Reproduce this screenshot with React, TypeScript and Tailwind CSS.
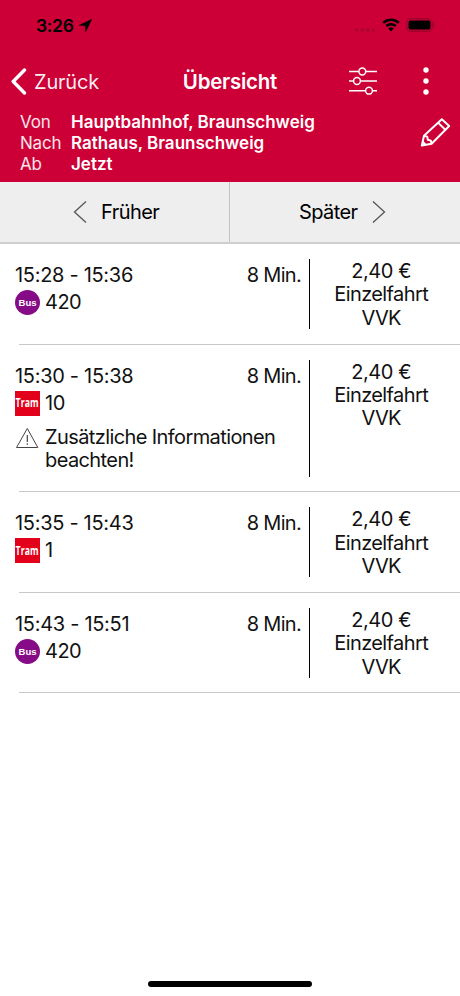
import clsx from 'clsx'

type Trip = {
  time: string
  duration: string
  kind: 'bus' | 'tram'
  line: string
  notice?: string
}

const trips: Trip[] = [
  { time: '15:28 - 15:36', duration: '8 Min.', kind: 'bus', line: '420' },
  { time: '15:30 - 15:38', duration: '8 Min.', kind: 'tram', line: '10', notice: 'Zusätzliche Informationen beachten!' },
  { time: '15:35 - 15:43', duration: '8 Min.', kind: 'tram', line: '1' },
  { time: '15:43 - 15:51', duration: '8 Min.', kind: 'bus', line: '420' },
]

const route = [
  { label: 'Von', value: 'Hauptbahnhof, Braunschweig' },
  { label: 'Nach', value: 'Rathaus, Braunschweig' },
  { label: 'Ab', value: 'Jetzt' },
]

function StatusBar() {
  return (
    <div className="flex h-[50px] items-center pl-9 pr-[24px] text-black">
      <span className="mt-0.5 text-[17.5px] font-semibold leading-5 tracking-[-0.3px]">3:26</span>
      <svg className="ml-[5px] mt-px" width="13" height="13" viewBox="0 0 13 13" fill="currentColor">
        <path d="M12.8.2.2 6.3l6 .5.5 6z" stroke="currentColor" strokeWidth=".4" />
      </svg>
      <svg className="ml-auto mt-2.5" width="22" height="4" viewBox="0 0 22 4" fill="#a00530">
        <circle cx="2.5" cy="2" r="1.5" />
        <circle cx="8.1" cy="2" r="1.5" />
        <circle cx="13.9" cy="2" r="1.5" />
        <circle cx="19.5" cy="2" r="1.5" />
      </svg>
      <svg className="ml-[6px]" width="18" height="14" viewBox="0 0 18 14">
        <path d="M1.2 4.8a11.4 11.4 0 0 1 15.6 0" fill="none" stroke="#000" strokeWidth="2.5" />
        <path d="M4.3 8a7 7 0 0 1 9.4 0" fill="none" stroke="#000" strokeWidth="2.4" />
        <path d="M9 13.4 6.2 10.5a4.2 4.2 0 0 1 5.6 0z" />
      </svg>
      <svg className="ml-[6px]" width="30" height="14" viewBox="0 0 30 14">
        <rect x=".8" y=".8" width="25.4" height="12.4" rx="3.6" fill="none" stroke="#8a0627" />
        <rect x="2.5" y="2.5" width="22" height="9" rx="2" />
        <path d="M27.6 4.8c1.3.5 1.3 3.9 0 4.4z" fill="#8a0627" />
      </svg>
    </div>
  )
}

function Header() {
  return (
    <header className="h-[182px] bg-[#cc0036] text-white">
      <StatusBar />
      <div className="grid h-[62px] grid-cols-3 items-center pl-[11px] pr-[31px]">
        <button className="flex items-center text-[20px] leading-6">
          <svg width="16" height="27" viewBox="0 0 16 27" fill="none" stroke="currentColor" strokeWidth="3.4" strokeLinecap="round" strokeLinejoin="round">
            <path d="M13.5 2 2.2 13.5l11.3 11.5" />
          </svg>
          <span className="ml-[7px] mt-px tracking-[-0.2px] text-white/95">Zurück</span>
        </button>
        <h1 className="ml-[20px] mt-px text-center text-[20.5px] font-semibold leading-6 tracking-[-0.25px]">Übersicht</h1>
        <div className="flex items-center justify-end gap-[46px]">
          <svg width="28" height="28" viewBox="0 0 28 28" fill="none" stroke="currentColor" strokeWidth="1.5">
            <path d="M0 4.5h9.8M16.8 4.5H28M0 14h4.5M11.5 14H28M0 23.7h16.5M23.5 23.7H28" />
            <circle cx="13.3" cy="4.5" r="3.4" />
            <circle cx="8" cy="14" r="3.4" />
            <circle cx="20" cy="23.7" r="3.4" />
          </svg>
          <svg width="6" height="28" viewBox="0 0 6 28" fill="currentColor">
            <circle cx="3" cy="3" r="2.7" />
            <circle cx="3" cy="14" r="2.7" />
            <circle cx="3" cy="25" r="2.7" />
          </svg>
        </div>
      </div>
      <div className="flex justify-between pl-5 pr-[9px]">
        <dl className="text-[17px] leading-[21px]">
          {route.map((r) => (
            <div key={r.label} className="flex">
              <dt className="w-[51px] tracking-[-0.2px] text-white/90">{r.label}</dt>
              <dd className="font-semibold">{r.value}</dd>
            </div>
          ))}
        </dl>
        <svg className="mt-[5px]" width="31" height="31" viewBox="0 0 31 31" fill="none" stroke="currentColor" strokeWidth="2" strokeLinejoin="round">
          <path d="M1.8 28.6 4 18.8 21.8 2.2 29.2 9 11.6 26.8z" />
          <path d="M18 5.6l7.3 7.2M4 18.8l3.2.8.6 3.2 3 .8.8 3.2" />
          <path d="M1.8 28.6l1.1-5 4 4.2z" fill="currentColor" stroke="none" />
        </svg>
      </div>
    </header>
  )
}

function Pager() {
  return (
    <nav className="flex h-[62px] border-b-2 border-[#cfcfcf] bg-[#eeeeee] text-[20px] leading-6 tracking-[-0.55px] text-black">
      <button className="flex w-[230px] items-center border-r border-[#c4c4c4] pl-[73px]">
        <svg width="14" height="24" viewBox="0 0 14 24" fill="none" stroke="#555" strokeWidth="1.3">
          <path d="M13 1.5 1.5 12 13 22.5" />
        </svg>
        <span className="ml-[14px]">Früher</span>
      </button>
      <button className="flex flex-1 items-center pl-[69px]">
        <span className="w-[59px] text-left tracking-[-0.6px]">Später</span>
        <svg className="ml-[14px]" width="14" height="24" viewBox="0 0 14 24" fill="none" stroke="#555" strokeWidth="1.3">
          <path d="M1 1.5 12.5 12 1 22.5" />
        </svg>
      </button>
    </nav>
  )
}

function LineBadge({ kind }: { kind: Trip['kind'] }) {
  if (kind === 'bus') {
    return (
      <span className="flex size-[25px] items-center justify-center rounded-full bg-[#850c86] font-['Liberation_Sans',sans-serif] text-[9.5px] font-bold leading-none tracking-normal text-white">
        Bus
      </span>
    )
  }
  return (
    <span className="flex size-[25px] items-center justify-center bg-[#e2001a] font-['Open_Sans',sans-serif] text-[11.5px] font-bold leading-none tracking-normal text-white">
      <span className="scale-x-[0.76]">Tram</span>
    </span>
  )
}

function TripRow({ trip }: { trip: Trip }) {
  return (
    <li>
      <div className={clsx('flex pt-[15px]', trip.notice ? 'h-[146.6px]' : 'h-[99.6px]')}>
        <div className="w-[309px] shrink-0 pl-[15px] pt-[2px]">
          <div className="flex w-[286px] justify-between leading-7">
            <span className="tracking-[-0.3px]">{trip.time}</span>
            <span className="tracking-[-0.7px]">{trip.duration}</span>
          </div>
          <div className="flex items-center gap-[5px] leading-[27px]">
            <LineBadge kind={trip.kind} />
            <span className="tracking-[-0.5px]">{trip.line}</span>
          </div>
          {trip.notice && (
            <div className="mt-[9px] flex leading-[23.4px]">
              <svg className="mt-px shrink-0" width="24" height="22" viewBox="0 0 24 22" fill="none" stroke="#444" strokeWidth="1">
                <path d="M12.3 1.5 22.8 20.5H1.5z" />
                <path d="M12.3 8v7M12.3 16.3v1.5" strokeWidth="1.2" />
              </svg>
              <span className="ml-[6px] w-[245px] tracking-[-0.6px]">{trip.notice}</span>
            </div>
          )}
        </div>
        <div className={clsx('w-[1.4px] shrink-0 bg-black', trip.notice ? 'h-[117px]' : 'h-[70px]')} />
        <div className="flex-1 pr-2 pt-[1px] text-center leading-[23.4px] tracking-[-0.6px]">
          <p className="tracking-[-0.4px]">2,40 €</p>
          <p>Einzelfahrt</p>
          <p>VVK</p>
        </div>
      </div>
      <div className="ml-[19px] h-px bg-[#c8c8c8]" />
    </li>
  )
}

export default function App() {
  return (
    <div className="flex h-[996px] w-[460px] flex-col overflow-hidden bg-white font-[Inter,sans-serif] text-[#111]">
      <Header />
      <Pager />
      <ul className="flex-1 text-[20px]">
        {trips.map((trip) => (
          <TripRow key={trip.time} trip={trip} />
        ))}
      </ul>
      <div className="mx-auto mb-[9px] h-[6px] w-[164px] rounded-full bg-black" />
    </div>
  )
}
